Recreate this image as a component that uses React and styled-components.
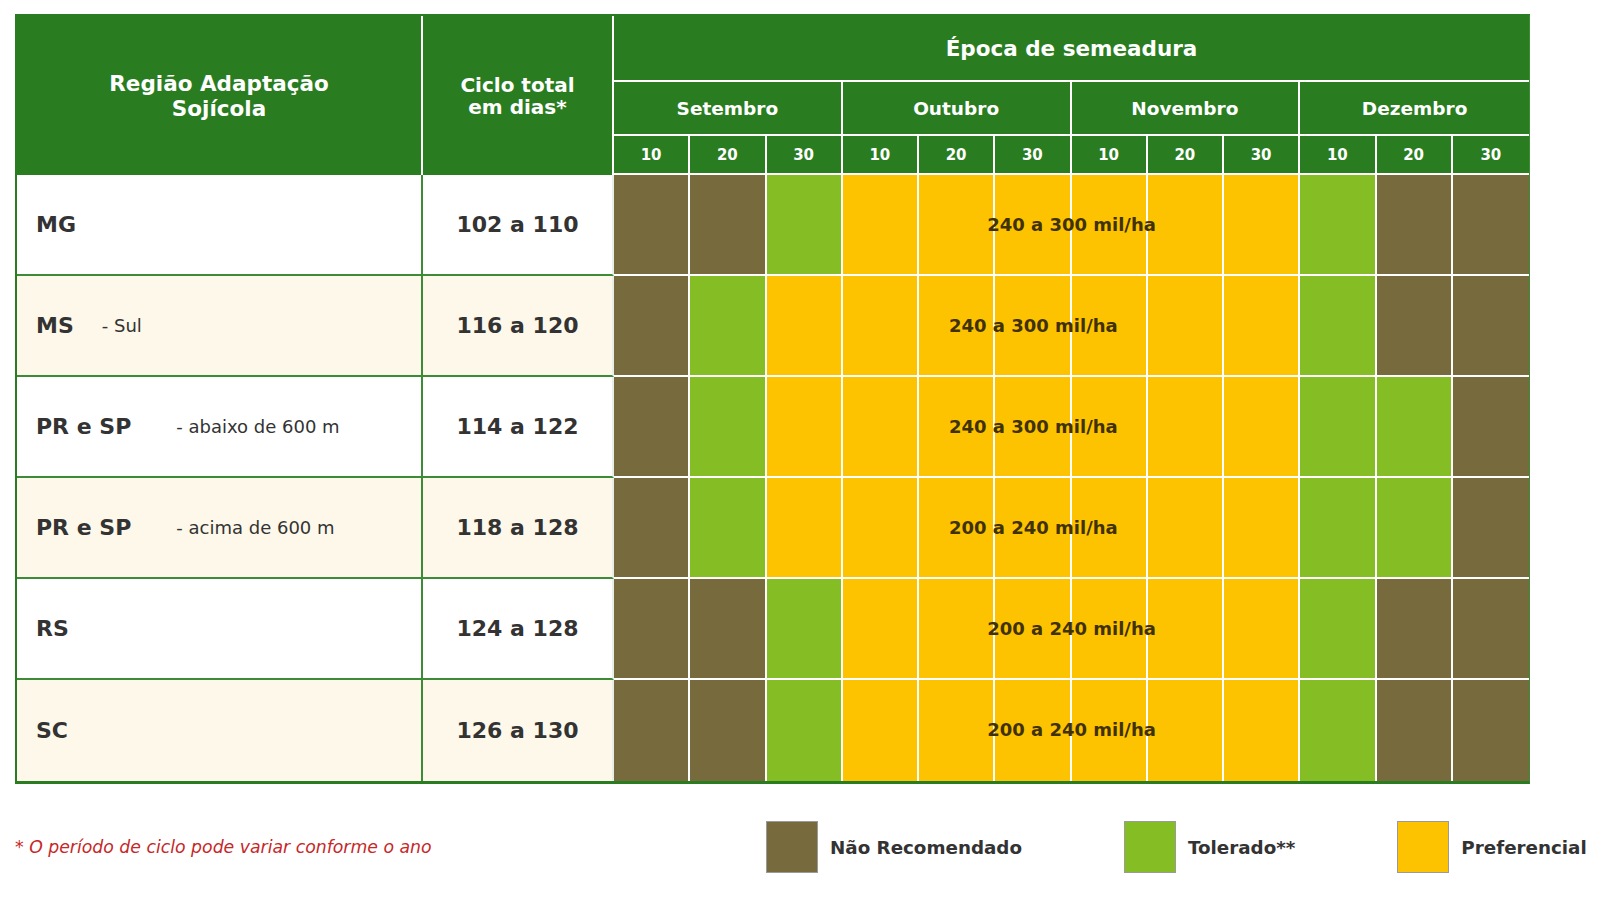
import React from "react";
import styled, { createGlobalStyle } from "styled-components";

const GlobalStyle = createGlobalStyle`
  html, body {
    margin: 0;
    background: #ffffff;
  }
  body {
    font-family: "DejaVu Sans", Verdana, sans-serif;
  }
`;

const SHADES = {
  B: "#776b3d",
  G: "#85bd24",
  Y: "#fec300",
};

const HEADER_GREEN = "#297d20";
const LINE_GREEN = "#3b8b37";

const months = ["Setembro", "Outubro", "Novembro", "Dezembro"];
const days = ["10", "20", "30"];

const rows = [
  { uf: "MG", note: "", gap: 0, cycle: "102 a 110", plan: "BBGYYYYYYGBB", density: "240 a 300 mil/ha" },
  { uf: "MS", note: "- Sul", gap: 28, cycle: "116 a 120", plan: "BGYYYYYYYGBB", density: "240 a 300 mil/ha" },
  { uf: "PR e SP", note: "- abaixo de 600 m", gap: 45, cycle: "114 a 122", plan: "BGYYYYYYYGGB", density: "240 a 300 mil/ha" },
  { uf: "PR e SP", note: "- acima de 600 m", gap: 45, cycle: "118 a 128", plan: "BGYYYYYYYGGB", density: "200 a 240 mil/ha" },
  { uf: "RS", note: "", gap: 0, cycle: "124 a 128", plan: "BBGYYYYYYGBB", density: "200 a 240 mil/ha" },
  { uf: "SC", note: "", gap: 0, cycle: "126 a 130", plan: "BBGYYYYYYGBB", density: "200 a 240 mil/ha" },
];

const Page = styled.div`
  padding: 14px 0 0 15px;
`;

const Table = styled.div`
  display: grid;
  width: 1515px;
  box-sizing: border-box;
  grid-template-columns: 406px 191px repeat(12, 1fr);
  grid-template-rows: 66px 54px 39px repeat(6, 101px);
  border-top: 2px solid ${HEADER_GREEN};
  border-left: 2px solid ${HEADER_GREEN};
  border-right: 1px solid ${LINE_GREEN};
  border-bottom: 3px solid ${HEADER_GREEN};
`;

const HeadCell = styled.div`
  grid-row: ${(p) => p.$row};
  grid-column: ${(p) => p.$col};
  box-sizing: border-box;
  display: flex;
  align-items: center;
  justify-content: center;
  text-align: center;
  background: ${HEADER_GREEN};
  color: #ffffff;
  font-weight: bold;
  border-right: ${(p) => (p.$last ? "none" : "2px solid #ffffff")};
  border-bottom: 2px solid #ffffff;
`;

const RegionHead = styled(HeadCell)`
  font-size: 21.5px;
  line-height: 25px;
  border-bottom: none;
`;

const CycleHead = styled(HeadCell)`
  font-size: 20px;
  line-height: 22px;
  border-bottom: none;
`;

const EpochHead = styled(HeadCell)`
  font-size: 21.5px;
`;

const MonthHead = styled(HeadCell)`
  font-size: 18.5px;
`;

const DayHead = styled(HeadCell)`
  font-size: 15px;
`;

const RegionCell = styled.div`
  grid-row: ${(p) => p.$row};
  grid-column: 1;
  box-sizing: border-box;
  display: flex;
  align-items: center;
  padding-left: 19px;
  background: ${(p) => (p.$alt ? "#fdf8e9" : "#ffffff")};
  color: #333333;
  border-right: 2px solid ${LINE_GREEN};
  border-bottom: ${(p) => (p.$end ? "none" : `2px solid ${LINE_GREEN}`)};
`;

const State = styled.span`
  font-size: 22px;
  font-weight: bold;
`;

const StateNote = styled.span`
  font-size: 18px;
  margin-left: ${(p) => p.$gap}px;
`;

const CycleCell = styled.div`
  grid-row: ${(p) => p.$row};
  grid-column: 2;
  box-sizing: border-box;
  display: flex;
  align-items: center;
  justify-content: center;
  background: ${(p) => (p.$alt ? "#fdf8e9" : "#ffffff")};
  color: #333333;
  font-size: 22px;
  font-weight: bold;
  border-right: 2px solid #e9efe6;
  border-bottom: ${(p) => (p.$end ? "none" : `2px solid ${LINE_GREEN}`)};
`;

const PlotCell = styled.div`
  grid-row: ${(p) => p.$row};
  grid-column: ${(p) => p.$col};
  box-sizing: border-box;
  background: ${(p) => SHADES[p.$kind]};
  border-right: ${(p) => (p.$last ? "none" : "2px solid #ffffff")};
  border-bottom: ${(p) => (p.$end ? "none" : "2px solid #ffffff")};
`;

const Density = styled.div`
  grid-row: ${(p) => p.$row};
  grid-column: ${(p) => p.$from} / ${(p) => p.$to};
  z-index: 1;
  display: flex;
  align-items: center;
  justify-content: center;
  padding-bottom: 2px;
  font-size: 18px;
  font-weight: bold;
  color: #3f3100;
  pointer-events: none;
`;

const Footer = styled.div`
  display: flex;
  align-items: center;
  margin-top: 37px;
`;

const Note = styled.p`
  margin: 0;
  width: 751px;
  flex: 0 0 751px;
  font-size: 17.3px;
  font-style: italic;
  color: #c62828;
`;

const Legend = styled.div`
  display: flex;
  align-items: center;
  gap: 102px;
`;

const LegendItem = styled.div`
  display: flex;
  align-items: center;
  gap: 12px;
  font-size: 18.3px;
  font-weight: bold;
  color: #333333;
`;

const Swatch = styled.span`
  display: block;
  width: 52px;
  height: 52px;
  box-sizing: border-box;
  border: 1px solid #9a9a9a;
  background: ${(p) => p.$color};
`;

function yellowSpan(plan) {
  const first = plan.indexOf("Y");
  const last = plan.lastIndexOf("Y");
  // plot columns start at grid column 3
  return [first + 3, last + 4];
}

export default function App() {
  return (
    <Page>
      <GlobalStyle />
      <Table>
        <RegionHead $row="1 / 4" $col={1}>
          Região Adaptação
          <br />
          Sojícola
        </RegionHead>
        <CycleHead $row="1 / 4" $col={2}>
          Ciclo total
          <br />
          em dias*
        </CycleHead>
        <EpochHead $row={1} $col="3 / 15" $last>
          Época de semeadura
        </EpochHead>
        {months.map((m, i) => (
          <MonthHead key={m} $row={2} $col={`${3 + i * 3} / span 3`} $last={i === 3}>
            {m}
          </MonthHead>
        ))}
        {months.map((m, i) =>
          days.map((d, j) => (
            <DayHead
              key={m + d}
              $row={3}
              $col={3 + i * 3 + j}
              $last={i === 3 && j === 2}
            >
              {d}
            </DayHead>
          ))
        )}

        {rows.map((r, i) => {
          const row = 4 + i;
          const alt = i % 2 === 1;
          const end = i === rows.length - 1;
          const [from, to] = yellowSpan(r.plan);
          return (
            <React.Fragment key={r.uf + r.note}>
              <RegionCell $row={row} $alt={alt} $end={end}>
                <State>{r.uf}</State>
                {r.note && <StateNote $gap={r.gap}>{r.note}</StateNote>}
              </RegionCell>
              <CycleCell $row={row} $alt={alt} $end={end}>
                {r.cycle}
              </CycleCell>
              {r.plan.split("").map((k, j) => (
                <PlotCell
                  key={j}
                  $row={row}
                  $col={3 + j}
                  $kind={k}
                  $last={j === 11}
                  $end={end}
                />
              ))}
              <Density $row={row} $from={from} $to={to}>
                {r.density}
              </Density>
            </React.Fragment>
          );
        })}
      </Table>

      <Footer>
        <Note>* O período de ciclo pode variar conforme o ano</Note>
        <Legend>
          <LegendItem>
            <Swatch $color={SHADES.B} />
            Não Recomendado
          </LegendItem>
          <LegendItem>
            <Swatch $color={SHADES.G} />
            Tolerado**
          </LegendItem>
          <LegendItem>
            <Swatch $color={SHADES.Y} />
            Preferencial
          </LegendItem>
        </Legend>
      </Footer>
    </Page>
  );
}
